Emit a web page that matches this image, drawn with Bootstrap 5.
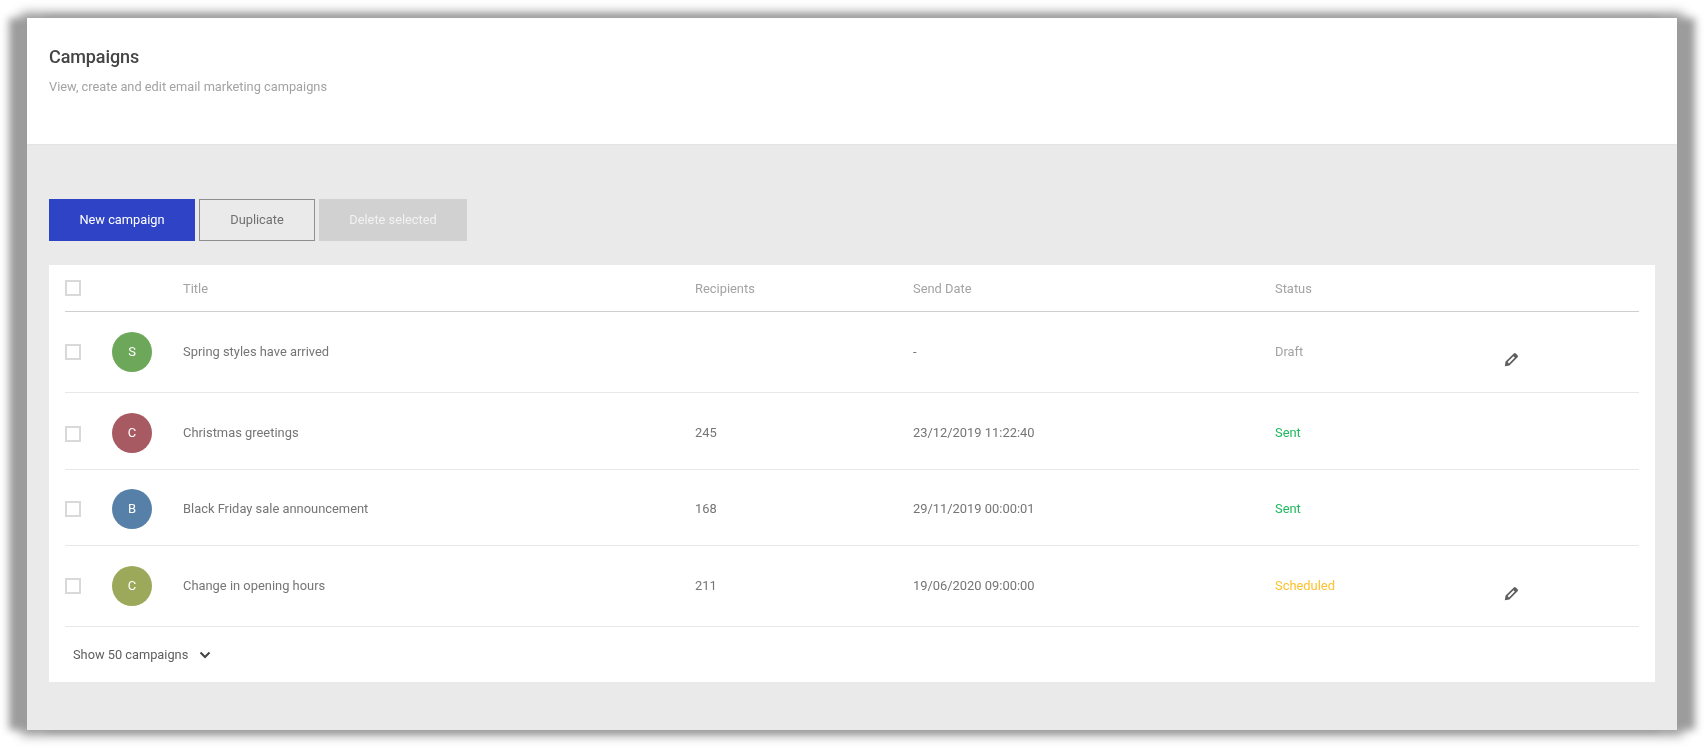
<!DOCTYPE html>
<html lang="en">
<head>
    <meta charset="UTF-8">
    <meta name="viewport" content="width=device-width, initial-scale=1.0">
    <title>Campaigns</title>
    <link href="https://cdn.jsdelivr.net/npm/bootstrap@5.3.0/dist/css/bootstrap.min.css" rel="stylesheet">
    <script src="https://cdn.jsdelivr.net/npm/bootstrap@5.3.0/dist/js/bootstrap.bundle.min.js"></script>
    <style>
        html, body { height: 100%; }
        body { background: #fff; font-family: Roboto, "Liberation Sans", sans-serif; padding: 18px 27px; overflow: hidden; }
        .app-frame {
            height: 712px; background: #eaeaea; filter: blur(.35px);
            box-shadow: -18px 0 8px #9c9c9c, 18px 0 8px #9c9c9c, 0 0 10px 6px #aaa;
        }
        .page-head { height: 126px; padding: 28px 22px 0; background: #fff; box-shadow: 0 1px 2px rgba(0,0,0,.04); }
        .page-head h1 { font-size: 18px; font-weight: 500; line-height: 21px; color: #444; margin: 0 0 9px; letter-spacing: -.1px; }
        .page-head p { font-size: 12.8px; line-height: 21px; color: #a3a3a3; margin: 0; }
        .page-body { padding: 55px 22px 0; }
        .action-btn { height: 42px; border-radius: 0; font-size: 12.8px; padding: 0; border: 1px solid transparent; }
        .btn-new { width: 146px; background: #2f43c6; color: #fff; }
        .btn-dup { width: 116px; border-color: #8e8e8e; color: #707070; background: transparent; }
        .btn-del { width: 148px; background: #d1d1d1; color: #f2f2f2; }
        .list-panel { margin-top: 24px; height: 417px; background: #fff; padding: 0 16px; }
        .camp-table { table-layout: fixed; width: 1574px; margin: 0; font-size: 12.9px; color: #757575; }
        .camp-table th, .camp-table td { padding: 0; vertical-align: middle; background: transparent; border: 0; box-shadow: none; }
        .camp-table th { height: 46px; padding-top: 2px; font-weight: 400; color: #a3a3a3; border-bottom: 1px solid #cfcfcf; }
        .camp-table td { height: 76px; padding-top: 3px; border-bottom: 1px solid #e8e8e8; color: #757575; }
        .camp-table tr.row-edit td { height: 81px; padding-top: 0; }
        .camp-table tr.row-tall td { height: 77px; padding-top: 5px; }
        .check-box { display: block; width: 16px; height: 16px; border: 2px solid #d9d9d9; background: #fff; margin: 0; }
        .camp-table td .check-box { margin-top: 1px; }
        .th-check { position: relative; top: -1px; }
        .avatar-dot { width: 40px; height: 40px; border-radius: 50%; color: #fff; display: flex; align-items: center; justify-content: center; font-size: 13px; }
        .camp-table td.st-muted { color: #a3a3a3; }
        .camp-table td.st-sent { color: #1fb85f; }
        .camp-table td.st-sched { color: #fdc12d; }
        .pen-icon { display: block; margin: 16px 0 0 -1px; }
        .panel-foot { padding: 0 8px; height: 56px; font-size: 12.8px; color: #5e5e5e; gap: 11px; }
    </style>
</head>
<body>
    <div class="app-frame">
        <div class="page-head">
            <h1>Campaigns</h1>
            <p>View, create and edit email marketing campaigns</p>
        </div>
        <div class="page-body">
            <div class="d-flex gap-1">
                <button class="btn action-btn btn-new">New campaign</button>
                <button class="btn action-btn btn-dup">Duplicate</button>
                <button class="btn action-btn btn-del">Delete selected</button>
            </div>
            <div class="list-panel">
                <table class="table camp-table">
                    <colgroup>
                        <col style="width:47px"><col style="width:71px"><col style="width:512px"><col style="width:218px"><col style="width:362px"><col style="width:230px"><col>
                    </colgroup>
                    <thead>
                        <tr>
                            <th><span class="check-box th-check"></span></th>
                            <th></th>
                            <th>Title</th>
                            <th>Recipients</th>
                            <th>Send Date</th>
                            <th>Status</th>
                            <th></th>
                        </tr>
                    </thead>
                    <tbody>
                        <tr class="row-edit">
                            <td><span class="check-box"></span></td>
                            <td><div class="avatar-dot" style="background:#6ca75a">S</div></td>
                            <td>Spring styles have arrived</td>
                            <td></td>
                            <td>-</td>
                            <td class="st-muted">Draft</td>
                            <td><svg class="pen-icon" width="15" height="15" viewBox="0 0 15 15"><path d="M.8 14.2 L1.6 9.6 L9.8 1.4 Q10.8 .5 11.8 1.4 L13.6 3.2 Q14.5 4.2 13.6 5.2 L5.4 13.4 Z M3.6 10 L5 11.4 L10.8 5.6 L9.4 4.2 Z" fill="#5f5f5f" fill-rule="evenodd"/></svg></td>
                        </tr>
                        <tr class="row-tall">
                            <td><span class="check-box"></span></td>
                            <td><div class="avatar-dot" style="background:#a85a62">C</div></td>
                            <td>Christmas greetings</td>
                            <td>245</td>
                            <td>23/12/2019 11:22:40</td>
                            <td class="st-sent">Sent</td>
                            <td></td>
                        </tr>
                        <tr>
                            <td><span class="check-box"></span></td>
                            <td><div class="avatar-dot" style="background:#5780a8">B</div></td>
                            <td>Black Friday sale announcement</td>
                            <td>168</td>
                            <td>29/11/2019 00:00:01</td>
                            <td class="st-sent">Sent</td>
                            <td></td>
                        </tr>
                        <tr class="row-edit">
                            <td><span class="check-box"></span></td>
                            <td><div class="avatar-dot" style="background:#9ca85a">C</div></td>
                            <td>Change in opening hours</td>
                            <td>211</td>
                            <td>19/06/2020 09:00:00</td>
                            <td class="st-sched">Scheduled</td>
                            <td><svg class="pen-icon" width="15" height="15" viewBox="0 0 15 15"><path d="M.8 14.2 L1.6 9.6 L9.8 1.4 Q10.8 .5 11.8 1.4 L13.6 3.2 Q14.5 4.2 13.6 5.2 L5.4 13.4 Z M3.6 10 L5 11.4 L10.8 5.6 L9.4 4.2 Z" fill="#5f5f5f" fill-rule="evenodd"/></svg></td>
                        </tr>
                    </tbody>
                </table>
                <div class="panel-foot d-flex align-items-center">
                    <span>Show 50 campaigns</span>
                    <svg width="12" height="8" viewBox="0 0 12 8"><path d="M1.5 1.5 L6 6 L10.5 1.5" fill="none" stroke="#444" stroke-width="2"/></svg>
                </div>
            </div>
        </div>
    </div>
</body>
</html>
